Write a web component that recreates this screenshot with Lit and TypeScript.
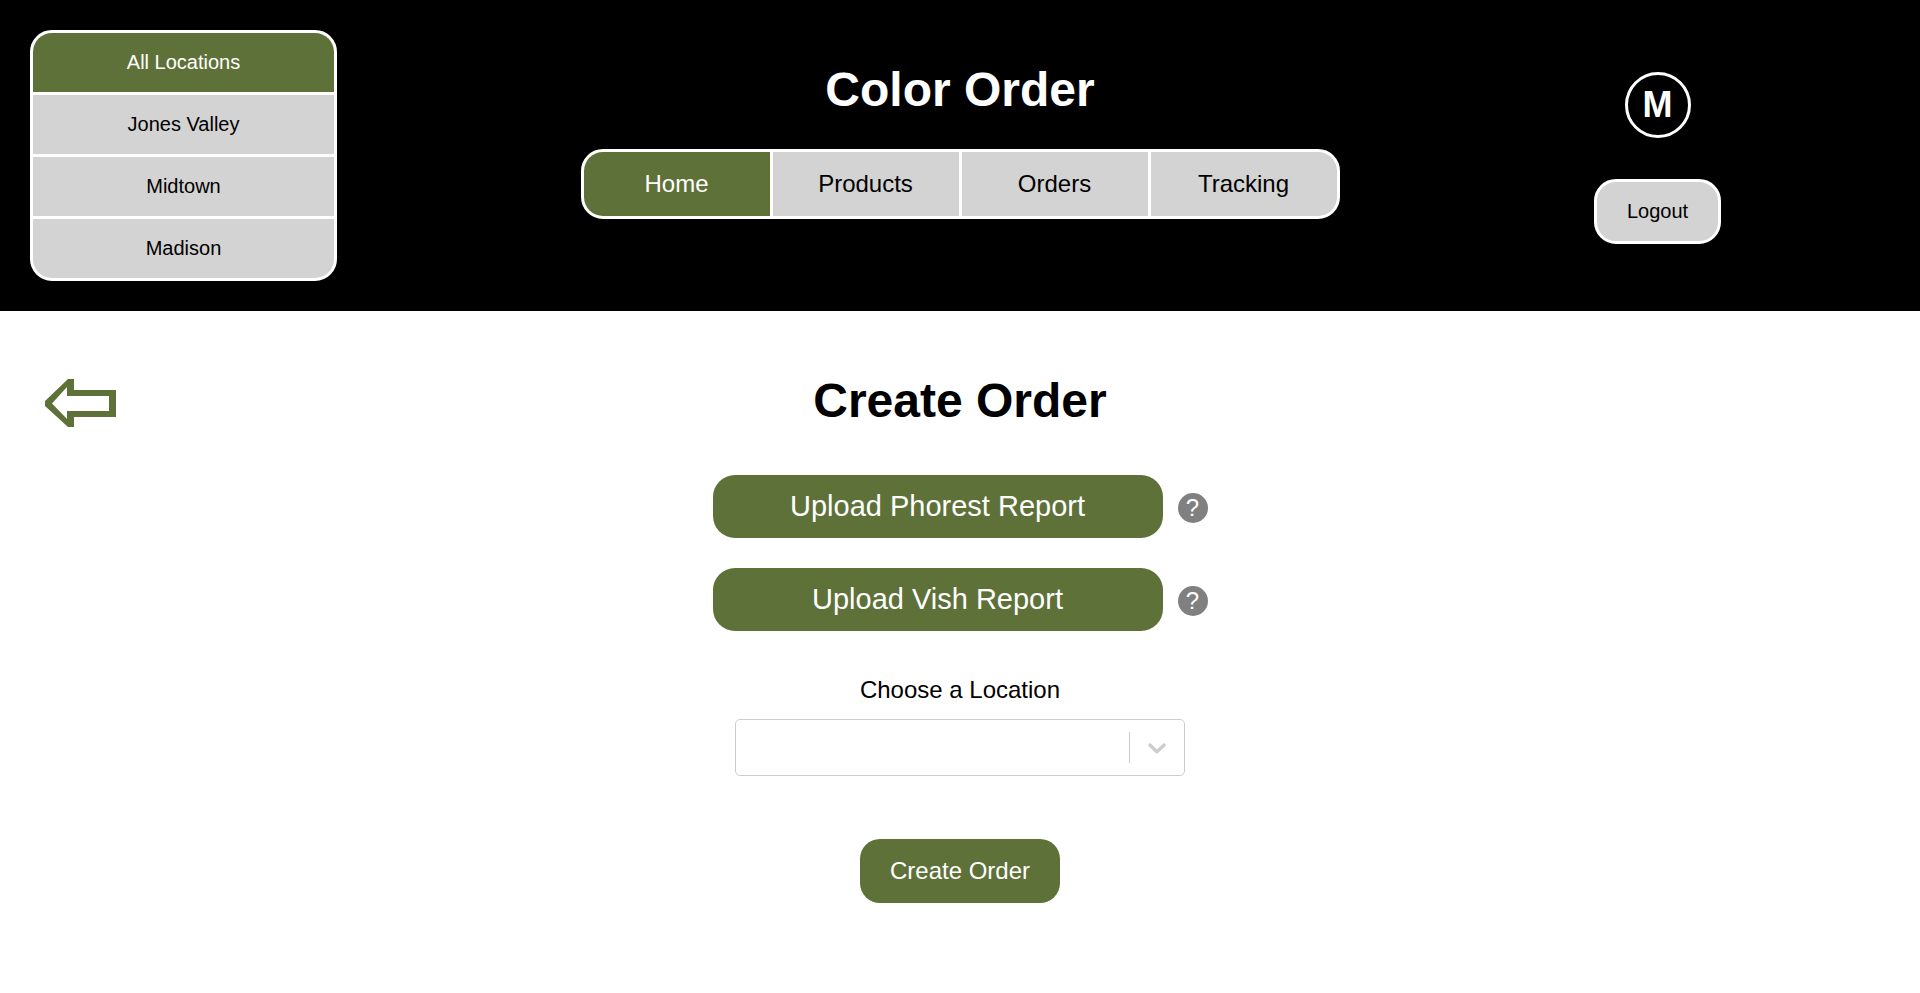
import { LitElement, html, css } from "lit";
import { customElement, property, state } from "lit/decorators.js";
import { classMap } from "lit/directives/class-map.js";

const LOCATIONS = ["Jones Valley", "Midtown", "Madison"];
const PAGES = ["Home", "Products", "Orders", "Tracking"];

@customElement("location-menu")
class LocationMenu extends LitElement {
  @state() private selected = "All Locations";

  static styles = css`
    :host {
      display: block;
    }
    .menu {
      display: flex;
      flex-direction: column;
      gap: 3px;
      box-sizing: border-box;
      width: 307px;
      max-width: 100%;
      border: 3px solid white;
      border-radius: 22px;
      background: white;
      overflow: hidden;
    }
    .item {
      padding: 18px 30px;
      border: 0;
      background: lightgray;
      color: black;
      font: inherit;
      font-size: 20px;
      line-height: 23px;
      cursor: pointer;
    }
    .selected {
      background: #5e7138;
      color: white;
    }
  `;

  render() {
    return html`
      <div class="menu" role="group" aria-label="Location">
        ${["All Locations", ...LOCATIONS].map(
          (name) => html`<button
            type="button"
            class=${classMap({ item: true, selected: name === this.selected })}
            aria-pressed=${name === this.selected}
            @click=${() => (this.selected = name)}
          >${name}</button>`
        )}
      </div>
    `;
  }
}

@customElement("page-nav")
class PageNav extends LitElement {
  @property() current = "Home";

  static styles = css`
    :host {
      display: block;
      max-width: 100%;
    }
    .nav {
      display: grid;
      grid-template-columns: repeat(4, minmax(0, 186px));
      gap: 3px;
      border: 3px solid white;
      border-radius: 22px;
      background: white;
      overflow: hidden;
    }
    .link {
      padding: 18px 0;
      background: lightgray;
      color: black;
      font-size: 24px;
      line-height: 28px;
      text-align: center;
      text-decoration: none;
    }
    .current {
      background: #5e7138;
      color: white;
    }
  `;

  render() {
    return html`
      <nav class="nav">
        ${PAGES.map(
          (page) => html`<a
            href="#${page.toLowerCase()}"
            class=${classMap({ link: true, current: page === this.current })}
          >${page}</a>`
        )}
      </nav>
    `;
  }
}

@customElement("upload-row")
class UploadRow extends LitElement {
  @property() label = "";

  static styles = css`
    :host {
      display: flex;
      align-items: baseline;
      justify-content: center;
      gap: 15px;
    }
    .upload {
      width: 450px;
      padding: 15px;
      border: 0;
      border-radius: 22px;
      background: #5e7138;
      color: white;
      font: inherit;
      font-size: 29px;
      line-height: 33px;
      cursor: pointer;
    }
    .help {
      flex: none;
      width: 30px;
      height: 30px;
      padding: 0;
      border: 0;
      border-radius: 50%;
      background: gray;
      color: white;
      font: inherit;
      font-size: 24px;
      line-height: 30px;
      cursor: pointer;
    }
  `;

  render() {
    return html`
      <button type="button" class="upload">${this.label}</button>
      <button type="button" class="help">?</button>
    `;
  }
}

@customElement("app-root")
class AppRoot extends LitElement {
  static styles = css`
    :host {
      display: block;
      min-height: 100vh;
      background: white;
      color: black;
      font-family: "Liberation Sans", Arial, Helvetica, sans-serif;
    }
    .band {
      display: grid;
      grid-template-columns: 35fr 58fr 35fr;
      padding: 30px 0;
    }
    .header {
      background: black;
      color: white;
    }
    .start {
      padding-left: 30px;
    }
    .center {
      display: flex;
      flex-direction: column;
      align-items: center;
    }
    .title {
      margin: 32px 0;
      font-size: 48px;
      font-weight: bold;
      line-height: 55px;
      text-align: center;
    }
    .account {
      display: flex;
      flex-direction: column;
      align-items: center;
      gap: 41px;
      padding-top: 42px;
    }
    .avatar {
      width: 60px;
      height: 60px;
      border: 3px solid white;
      border-radius: 50%;
      font-size: 36px;
      font-weight: bold;
      line-height: 60px;
      text-align: center;
    }
    .logout {
      padding: 18px 30px;
      border: 3px solid white;
      border-radius: 22px;
      background: lightgray;
      color: black;
      font: inherit;
      font-size: 20px;
      line-height: 23px;
      cursor: pointer;
    }
    .back {
      display: block;
      margin: 38px 15px;
      padding: 0;
      border: 0;
      background: none;
      cursor: pointer;
    }
    .back svg,
    .chevron {
      display: block;
    }
    .uploads {
      display: grid;
      gap: 30px;
      margin: 15px 0 45px;
    }
    .label {
      margin-bottom: 15px;
      font-size: 24px;
      line-height: 28px;
    }
    .picker {
      display: grid;
      grid-template-columns: 1fr auto;
      box-sizing: border-box;
      width: 450px;
      max-width: 100%;
      border: 1px solid #cccccc;
      border-radius: 5px;
    }
    .select {
      grid-area: 1 / 1 / 2 / 3;
      appearance: none;
      height: 55px;
      padding: 0 70px 0 12px;
      border: 0;
      background: transparent;
      color: black;
      font: inherit;
      font-size: 24px;
    }
    .indicator {
      grid-area: 1 / 2;
      align-self: center;
      padding: 0 12px;
      border-left: 1px solid #cccccc;
      pointer-events: none;
    }
    .create {
      margin-top: 63px;
      padding: 18px 30px;
      border: 0;
      border-radius: 20px;
      background: #5e7138;
      color: white;
      font: inherit;
      font-size: 24px;
      line-height: 28px;
      cursor: pointer;
    }
  `;

  render() {
    return html`
      <header class="band header">
        <location-menu class="start"></location-menu>
        <div class="center">
          <h1 class="title">Color Order</h1>
          <page-nav current="Home"></page-nav>
        </div>
        <div class="account">
          <div class="avatar">M</div>
          <button type="button" class="logout">Logout</button>
        </div>
      </header>
      <main class="band">
        <div class="start">
          <button type="button" class="back" aria-label="Back">
            <svg width="71" height="48" viewBox="0 0 71 48">
              <path
                fill="#5e7138"
                fill-rule="evenodd"
                d="M29 0H23L0 22V27L23 48H29V38H71V11H29ZM22 8L7 24.5L22 40V32H64V17H22Z"
              />
            </svg>
          </button>
        </div>
        <div class="center">
          <h1 class="title">Create Order</h1>
          <div class="uploads">
            <upload-row label="Upload Phorest Report"></upload-row>
            <upload-row label="Upload Vish Report"></upload-row>
          </div>
          <label class="label" for="location">Choose a Location</label>
          <div class="picker">
            <select class="select" id="location">
              <option value=""></option>
              ${LOCATIONS.map((name) => html`<option>${name}</option>`)}
            </select>
            <div class="indicator">
              <svg class="chevron" width="30" height="31" viewBox="0 0 20 20" aria-hidden="true">
                <path
                  fill="#cccccc"
                  d="M4.516 7.548c0.436-0.446 1.043-0.481 1.576 0l3.908 3.747 3.908-3.747c0.533-0.481 1.141-0.446 1.574 0 0.436 0.445 0.408 1.197 0 1.615-0.406 0.418-4.695 4.502-4.695 4.502-0.217 0.223-0.502 0.335-0.787 0.335s-0.57-0.112-0.789-0.335c0 0-4.287-4.084-4.695-4.502s-0.436-1.17 0-1.615z"
                />
              </svg>
            </div>
          </div>
          <button type="button" class="create">Create Order</button>
        </div>
      </main>
    `;
  }
}
